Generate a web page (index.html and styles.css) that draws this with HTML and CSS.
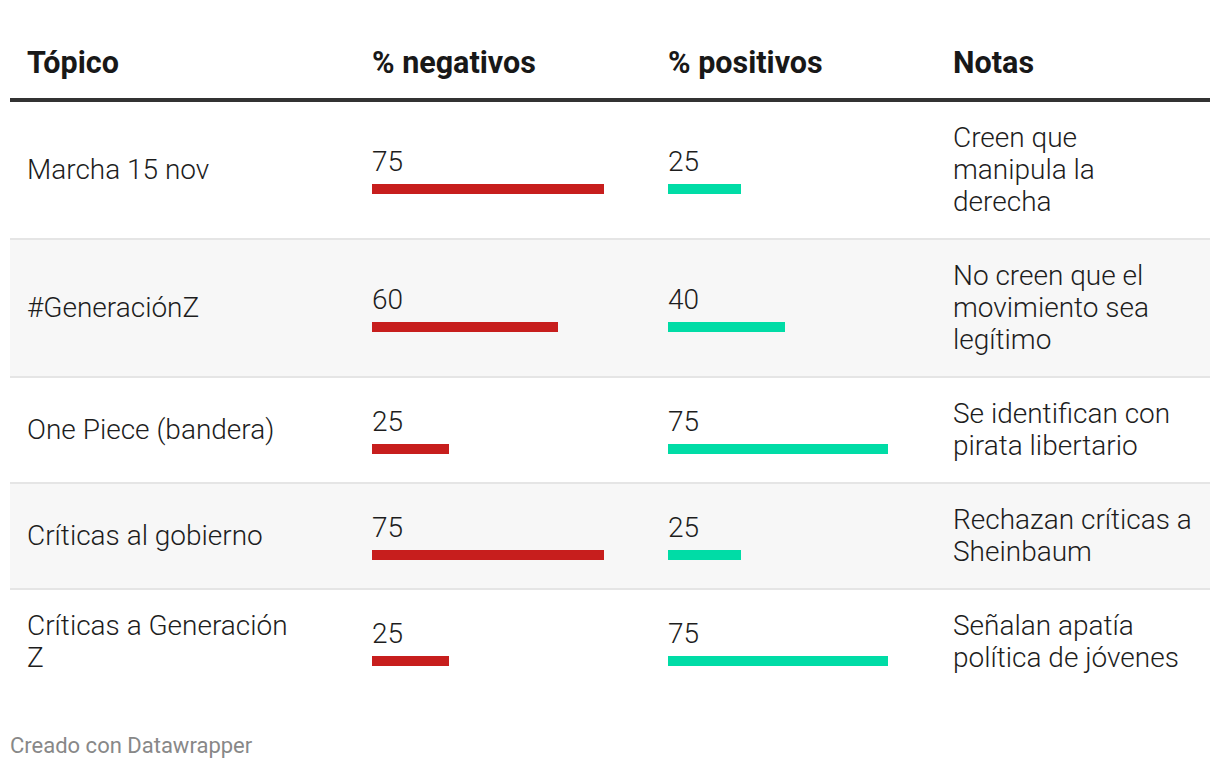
FILE: index.html
```html
<!DOCTYPE html>
<html lang="es">
<head>
<meta charset="utf-8">
<title>Tabla</title>
<link rel="stylesheet" href="styles.css">
</head>
<body>
<div class="chart">
  <div class="table">
    <div class="row head">
      <div class="cell name">Tópico</div>
      <div class="cell">% negativos</div>
      <div class="cell">% positivos</div>
      <div class="cell">Notas</div>
    </div>
    <div class="row">
      <div class="cell name">Marcha 15 nov</div>
      <div class="cell bar-cell"><div class="num">75</div><div class="bar neg" style="width:232px"></div></div>
      <div class="cell bar-cell"><div class="num">25</div><div class="bar pos" style="width:73.3px"></div></div>
      <div class="cell note">Creen que manipula la derecha</div>
    </div>
    <div class="row alt">
      <div class="cell name">#GeneraciónZ</div>
      <div class="cell bar-cell"><div class="num">60</div><div class="bar neg" style="width:185.6px"></div></div>
      <div class="cell bar-cell"><div class="num">40</div><div class="bar pos" style="width:117.3px"></div></div>
      <div class="cell note">No creen que el movimiento sea legítimo</div>
    </div>
    <div class="row">
      <div class="cell name">One Piece (bandera)</div>
      <div class="cell bar-cell"><div class="num">25</div><div class="bar neg" style="width:77.3px"></div></div>
      <div class="cell bar-cell"><div class="num">75</div><div class="bar pos" style="width:220px"></div></div>
      <div class="cell note">Se identifican con pirata libertario</div>
    </div>
    <div class="row alt">
      <div class="cell name">Críticas al gobierno</div>
      <div class="cell bar-cell"><div class="num">75</div><div class="bar neg" style="width:232px"></div></div>
      <div class="cell bar-cell"><div class="num">25</div><div class="bar pos" style="width:73.3px"></div></div>
      <div class="cell note">Rechazan críticas a Sheinbaum</div>
    </div>
    <div class="row last">
      <div class="cell name">Críticas a Generación Z</div>
      <div class="cell bar-cell"><div class="num">25</div><div class="bar neg" style="width:77.3px"></div></div>
      <div class="cell bar-cell"><div class="num">75</div><div class="bar pos" style="width:220px"></div></div>
      <div class="cell note">Señalan apatía política de jóvenes</div>
    </div>
  </div>
  <div class="footer">Creado con Datawrapper</div>
</div>
</body>
</html>
```

FILE: styles.css
```css
html, body {
  margin: 0;
  padding: 0;
  background: #ffffff;
}
body {
  font-family: Roboto, "Liberation Sans", sans-serif;
  color: #1d1d1d;
}
.chart {
  padding: 31px 10px 0 10px;
}
.table {
  display: flex;
  flex-direction: column;
}
.row {
  display: grid;
  grid-template-columns: 345px 296px 285px 240px;
  align-items: center;
  padding: 20px 17px 20px 17px;
  border-bottom: 2px solid #e5e5e5;
  font-size: 28px;
  font-weight: 300;
  line-height: 32px;
}
.cell.name {
  padding-right: 72px;
}
.row.alt {
  background: #f7f7f7;
}
.row.last {
  border-bottom: none;
}
.row.head {
  font-weight: 700;
  font-size: 30.5px;
  padding: 16px 17px 19px 17px;
  border-bottom: 4px solid #333333;
  color: #181818;
}
.bar-cell {
  display: flex;
  flex-direction: column;
  align-items: flex-start;
}
.num {
  line-height: 32px;
}
.bar {
  height: 10px;
  margin-top: 6px;
}
.bar.neg {
  background: #c71e1d;
}
.bar.pos {
  background: #00dca6;
}
.footer {
  margin-top: 40px;
  font-size: 22px;
  line-height: 24px;
  color: #888888;
  font-weight: 400;
}
```
